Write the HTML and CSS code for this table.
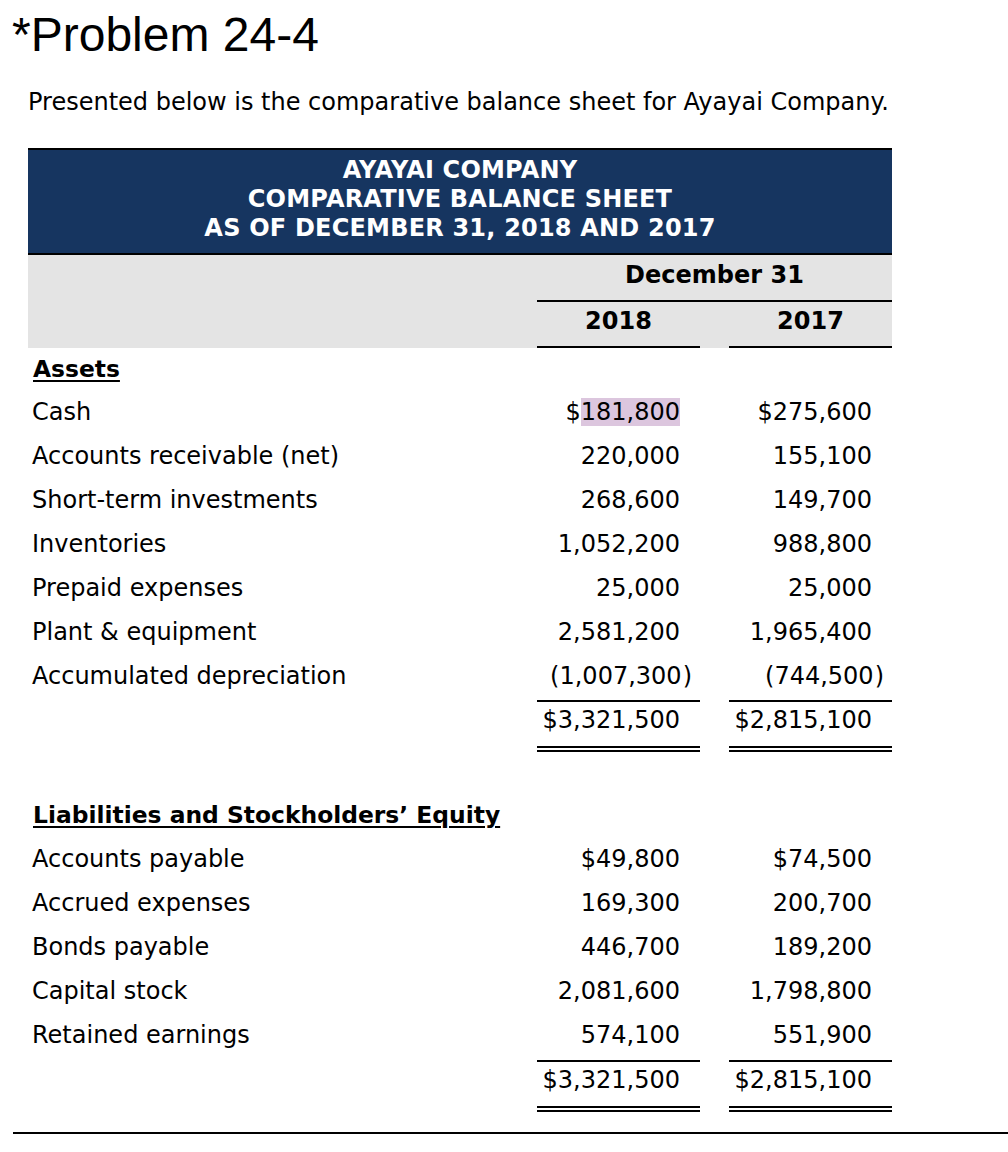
FILE: index.html
```html
<!DOCTYPE html>
<html lang="en">
<head>
<meta charset="utf-8">
<title>Problem 24-4</title>
<link rel="stylesheet" href="styles.css">
</head>
<body>
<div class="page">
  <h1 class="title">*Problem 24-4</h1>
  <p class="intro">Presented below is the comparative balance sheet for Ayayai Company.</p>

  <div class="sheet">
    <div class="banner">
      <div>AYAYAI COMPANY</div>
      <div>COMPARATIVE BALANCE SHEET</div>
      <div>AS OF DECEMBER 31, 2018 AND 2017</div>
    </div>

    <div class="grid colhead">
      <div class="period">December 31</div>
      <div class="year c1">2018</div>
      <div class="year c2">2017</div>
    </div>

    <div class="grid row heading first"><div class="label"><span class="uline">Assets</span></div></div>
    <div class="grid row"><div class="label">Cash</div><div class="num">$<span class="hl">181,800</span></div><div class="num">$275,600</div></div>
    <div class="grid row"><div class="label">Accounts receivable (net)</div><div class="num">220,000</div><div class="num">155,100</div></div>
    <div class="grid row"><div class="label">Short-term investments</div><div class="num">268,600</div><div class="num">149,700</div></div>
    <div class="grid row"><div class="label">Inventories</div><div class="num">1,052,200</div><div class="num">988,800</div></div>
    <div class="grid row"><div class="label">Prepaid expenses</div><div class="num">25,000</div><div class="num">25,000</div></div>
    <div class="grid row"><div class="label">Plant &amp; equipment</div><div class="num">2,581,200</div><div class="num">1,965,400</div></div>
    <div class="grid row"><div class="label">Accumulated depreciation</div><div class="num">(1,007,300<span class="cp">)</span></div><div class="num">(744,500<span class="cp">)</span></div></div>
    <div class="grid row total t1"><div class="label"></div><div class="num">$3,321,500</div><div class="num">$2,815,100</div></div>

    <div class="grid row heading second"><div class="label"><span class="uline">Liabilities and Stockholders’ Equity</span></div></div>
    <div class="grid row"><div class="label">Accounts payable</div><div class="num">$49,800</div><div class="num">$74,500</div></div>
    <div class="grid row"><div class="label">Accrued expenses</div><div class="num">169,300</div><div class="num">200,700</div></div>
    <div class="grid row"><div class="label">Bonds payable</div><div class="num">446,700</div><div class="num">189,200</div></div>
    <div class="grid row"><div class="label">Capital stock</div><div class="num">2,081,600</div><div class="num">1,798,800</div></div>
    <div class="grid row"><div class="label">Retained earnings</div><div class="num">574,100</div><div class="num">551,900</div></div>
    <div class="grid row total t2"><div class="label"></div><div class="num">$3,321,500</div><div class="num">$2,815,100</div></div>
  </div>

  <div class="rule"></div>
</div>
</body>
</html>
```

FILE: styles.css
```css
* { box-sizing: border-box; }

body {
  margin: 0;
  background: #fff;
  color: #000;
  font-family: "DejaVu Sans", Verdana, sans-serif;
}

.page {
  padding: 7px 0 0 12px;
}

.title {
  margin: 0;
  font-family: "Liberation Sans", Arial, sans-serif;
  font-weight: 400;
  font-size: 48px;
  line-height: 56px;
}

.intro {
  margin: 24px 0 0 16px;
  font-size: 24px;
  line-height: 30px;
}

.sheet {
  margin: 31px 0 0 16px;
  width: 864px;
}

.banner {
  background: #163560;
  border-top: 2px solid #000;
  border-bottom: 2px solid #000;
  padding: 6px 0 10px;
  color: #fff;
  font-weight: 700;
  font-size: 24px;
  line-height: 29px;
  letter-spacing: 0.2px;
  text-align: center;
}

.grid {
  display: grid;
  grid-template-columns: 1fr 163px 163px;
  column-gap: 29px;
}

.colhead {
  background: #e4e4e4;
  font-weight: 700;
  font-size: 24px;
  text-align: center;
}

.period {
  grid-column: 2 / 4;
  grid-row: 1;
  line-height: 34px;
  padding: 3px 0 8px;
  border-bottom: 2px solid #000;
}

.year {
  grid-row: 2;
  line-height: 34px;
  padding: 2px 0 8px;
  border-bottom: 2px solid #000;
}

.c1 { grid-column: 2; }
.c2 { grid-column: 3; }

.row {
  font-size: 24px;
  line-height: 44px;
}

.label {
  padding-left: 4px;
  white-space: nowrap;
}

.num {
  text-align: right;
  padding-right: 20px;
  white-space: nowrap;
}

.hl {
  background: #dcc6de;
}

.cp {
  margin-right: -12px;
  padding-left: 1px;
}

.heading {
  font-size: 23.4px;
  font-weight: 700;
  line-height: 42px;
}

.heading .label {
  padding-left: 5px;
}

.heading.second {
  margin-top: 41px;
  line-height: 44px;
}

.uline {
  text-decoration: underline;
  text-decoration-thickness: 2px;
  text-underline-offset: 3px;
}

.total {
  line-height: 36px;
}

.total.t1 { margin-top: 2px; }
.total.t2 { margin-top: 3px; }

.total .num {
  border-top: 2px solid #000;
  border-bottom: 6px double #000;
  padding-bottom: 8px;
}

.rule {
  height: 2px;
  background: #000;
  margin: 20px 0 0 1px;
}
```
